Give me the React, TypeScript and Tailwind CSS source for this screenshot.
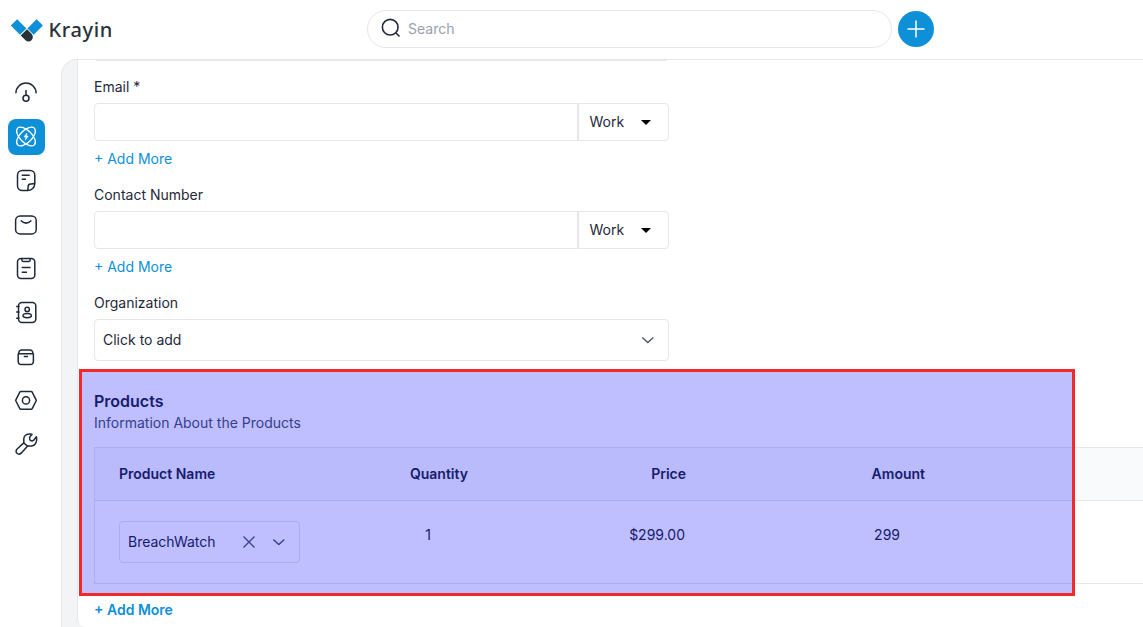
import type { ReactNode } from "react";

const icons: ReactNode[] = [
  <>
    <path d="M1.9 12.2a10.1 10.1 0 0 1 20.2 0M12 9v5.2" />
    <circle cx="12" cy="17.3" r="3" />
  </>,
  <>
    <ellipse cx="12" cy="11.5" rx="11.8" ry="6" transform="rotate(45 12 11.5)" strokeWidth="1.3" />
    <ellipse cx="12" cy="11.5" rx="11.8" ry="6" transform="rotate(-45 12 11.5)" strokeWidth="1.3" />
    <path d="M12.9 8 10 12h1.900l-.6 3.200 3-4.200h-1.900z" fill="currentColor" strokeWidth=".5" />
  </>,
  <>
    <path d="M13.6 21.5H8.2a4.7 4.7 0 0 1-4.7-4.7V6.2a4.7 4.7 0 0 1 4.7-4.7h7.900a4.700 4.700 0 0 1 4.700 4.700v8.200c0 3.900-3.300 7.100-7.200 7.100ZM13.600 21.300c.7-1.400.5-2.400.5-3.600 0-1.700.9-2.700 2.600-2.700 1.700 0 3 .1 4-1M7.700 6.300h8M7.700 10.200h4.300" />
  </>,
  <>
    <rect x="1.600" y="2.900" width="20.600" height="18" rx="4.500" />
    <path d="M6.700 7.500c3.800 3.700 6.900 3.700 10.700 0" />
  </>,
  <>
    <rect x="3.500" y="1.600" width="17.300" height="19.800" rx="3.500" />
    <path d="M7.800 1.800v1c0 .9.5 1.600 1.400 1.600h5.600c.9 0 1.400-.7 1.400-1.600v-1M7.700 10.400h8.900M7.700 15.300H13" />
  </>,
  <>
    <rect x="4.500" y="1.400" width="17.300" height="20" rx="3.500" />
    <path d="M2.200 5.500h3.300M2.200 11h3.300M2.200 17.300h3.300" />
    <circle cx="13.200" cy="8.400" r="2.200" />
    <ellipse cx="13.200" cy="14.600" rx="4.200" ry="2.200" />
  </>,
  <>
    <path d="M4.200 9.500 5.300 6.300c.4-1 1-1.400 2-1.400h9c1 0 1.600.4 2 1.400l1.100 3.200v6.700c0 2-1.300 3.300-3.300 3.300H7.500c-2 0-3.300-1.300-3.300-3.300zM4.400 8.700h14.800M9.800 11.500h4.200" />
  </>,
  <>
    <path d="M6.800 2.600h10.400c.5 0 .8.200 1 .6l3.900 7.600c.2.400.2.800 0 1.200l-3.900 7.600c-.2.400-.5.600-1 .6H6.800c-.5 0-.8-.2-1-.6L1.900 12c-.2-.4-.2-.8 0-1.200l3.900-7.600c.2-.4.500-.6 1-.6Z" />
    <circle cx="12" cy="11.400" r="3.600" />
  </>,
  <>
    <path d="M9.800 9.900V5.800c0-3.400 3.200-5.500 8.200-4.600l-2 2.500c-.8 1.200-.2 2.700 0 3.200.5 1 2.200 1.400 3.400.5l3-3.600c.7 3-.1 5.600-1.200 7.200-.9 1.400-2.200 2.100-4 2.100h-3.600L7.400 19.900c-1.400 1.400-3.200 1.500-4.400.4-1.300-1.300-1.200-3.100.1-4.300zM9.800 9.900l3.800 3.300" />
  </>,
];

function Chevron() {
  return (
    <svg viewBox="0 0 14 14" className="size-[14px] text-gray-600" fill="none" stroke="currentColor" strokeWidth="1.400">
      <path d="m1.300 4.500 5.500 5 5.500-5" />
    </svg>
  );
}

function ContactField({ label }: { label: string }) {
  return (
    <div className="h-[108px]">
      <div className="h-[26px]">{label}</div>
      <div className="flex h-[38px]">
        <div className="w-[484px] rounded-l border border-gray-200" />
        <div className="flex w-[91px] items-center rounded-r border border-gray-200 pl-[10.5px]">
          <span className="w-[51px]">Work</span>
          <svg viewBox="0 0 10 5" className="h-[5px] w-[10px]">
            <path d="M0 0h10L5 5z" fill="#000" />
          </svg>
        </div>
      </div>
      <div className="mt-2 text-[#0e90d9]">+ Add More</div>
    </div>
  );
}

export default function App() {
  return (
    <div className="flex h-[627px] w-[1143px] flex-col overflow-hidden bg-white font-['Inter',sans-serif] text-[14px] leading-5 text-gray-800">
      <header className="flex h-[59px] shrink-0 items-center">
        <div className="flex w-[367px] items-center pl-[10px]">
          <svg viewBox="0 0 34 24" className="h-6 w-[34px]">
            <path d="m7.200 1.200 9.200 9.200-6.400 6.300L.8 7.500zM26.600 1.200l6.300 6.300-9.200 9.200-6.300-6.300z" fill="#0e90d9" />
            <path d="m17 11.200 4.500 4.500a4.600 4.600 0 0 1 0 6.500c-1.700 1.700-4.300 1.700-6 0L10.700 17.500z" fill="#263238" />
          </svg>
          <span className="ml-[4.5px] font-['Noto_Sans',sans-serif] text-[20px] font-medium leading-6 tracking-[0.65px] text-[#263238]">Krayin</span>
        </div>
        <div className="mt-[-1px] flex h-[38px] w-[525px] items-center rounded-full border border-gray-200 pl-[13px]">
          <svg viewBox="0 0 20 20" className="mt-[-2px] size-5" fill="none" stroke="currentColor" strokeWidth="1.600">
            <circle cx="9.200" cy="9.200" r="7.800" />
            <path d="m14.500 14.500 4 4" />
          </svg>
          <span className="ml-[7px] text-gray-400">Search</span>
        </div>
        <div className="mt-[-1px] ml-[6px] flex size-9 items-center justify-center rounded-full bg-[#0e90d9]">
          <svg viewBox="0 0 18 18" className="size-[18px]" stroke="#fff" strokeWidth="1.500">
            <path d="M9 .5v17M.5 9h17" />
          </svg>
        </div>
      </header>

      <div className="flex min-h-0 flex-1">
        <nav className="flex w-[61px] shrink-0 flex-col pt-3 pl-2">
          {icons.map((icon, i) => (
            <div key={i} className="flex h-11 shrink-0 items-center">
              <div className={i === 1 ? "flex h-9 w-[37px] items-center rounded-lg bg-[#0e90d9] pl-[6px] text-white" : "flex h-9 w-[37px] items-center pl-[6px]"}>
                <svg viewBox="0 0 24 24" className="size-6" fill="none" stroke="currentColor" strokeWidth="1.500" strokeLinejoin="round">
                  {icon}
                </svg>
              </div>
            </div>
          ))}
        </nav>

        <main className="min-w-0 flex-1 overflow-hidden rounded-tl-2xl border-t border-l border-gray-200 bg-gray-100 pl-[15px]">
          <div className="relative h-full rounded-bl-lg border-l border-gray-200 bg-white pl-4">
            <div className="h-px w-[575px] px-[2px]">
              <div className="h-px bg-gray-200" />
            </div>
            <div className="pt-4">
              <ContactField label="Email *" />
              <ContactField label="Contact Number" />
              <div className="h-[26px]">Organization</div>
              <div className="flex h-[42px] w-[575px] items-center justify-between rounded border border-gray-200 pr-[13px] pl-2">
                <span>Click to add</span>
                <Chevron />
              </div>
            </div>

            <section>
              <h2 className="mt-[28px] text-[16px] leading-6 font-semibold">Products</h2>
              <p className="text-gray-600">Information About the Products</p>
              <div className="mt-[14px] w-[1200px] border border-gray-200">
                <div className="flex h-[53px] items-center border-b border-gray-200 bg-gray-50 pl-6 font-semibold">
                  <div className="w-[181px]">Product Name</div>
                  <div className="w-[168px] text-right">Quantity</div>
                  <div className="w-[218px] text-right">Price</div>
                  <div className="w-[239px] text-right">Amount</div>
                </div>
                <div className="flex h-[82px] pt-5 pl-6">
                  <div className="flex h-[42px] w-[181px] items-center rounded border border-gray-200 pl-2">
                    <span className="w-[114px]">BreachWatch</span>
                    <svg viewBox="0 0 14 14" className="size-[14px] text-gray-600" stroke="currentColor" strokeWidth="1.300">
                      <path d="m1.500 1.500 11 11M12.500 1.500l-11 11" />
                    </svg>
                    <span className="ml-4"><Chevron /></span>
                  </div>
                  <div className="mt-1 w-[131px] text-right">1</div>
                  <div className="mt-1 w-[254px] text-right">$299.00</div>
                  <div className="mt-1 w-[215px] text-right">299</div>
                </div>
              </div>
              <div className="mt-4 font-semibold text-[#0e90d9]">+ Add More</div>
              <div className="absolute top-[309px] left-px h-[227px] w-[996px] border-[3px] border-[#f32828] bg-[#0000ff]/25 bg-clip-padding" />
            </section>
          </div>
        </main>
      </div>
    </div>
  );
}
